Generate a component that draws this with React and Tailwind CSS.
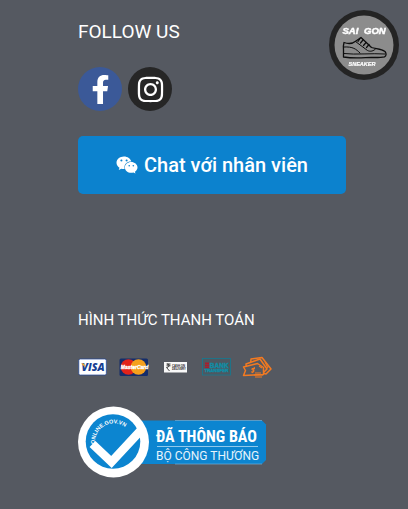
import { FaFacebookF, FaInstagram, FaWeixin } from "react-icons/fa";

function BrandBadge() {
  return (
    <svg viewBox="0 0 70 70" className="size-[70px]" aria-hidden="true">
      <circle cx="35" cy="35" r="35" fill="#242424" />
      <circle cx="35" cy="35" r="29.5" fill="#8c8c8c" />
      <g fill="#fff" stroke="#fff" fontFamily="'Liberation Sans', Arial, sans-serif" fontWeight="700" fontStyle="italic">
        <text x="13.5" y="24" fontSize="9.5" strokeWidth=".5">SAI</text>
        <text x="35" y="24" fontSize="9.5" strokeWidth=".5">GON</text>
        <text x="19.5" y="56" fontSize="5.5" strokeWidth=".2">SNEAKER</text>
      </g>
      <g fill="none" stroke="#0d0d0d" strokeLinejoin="round" strokeLinecap="round">
        <path strokeWidth="1.3" d="M15 32.500q-1 3.500-.5 7.500v7q10 1.500 22 .6c7-.4 14 .4 19-.8 2-1 2-3.500 .5-5.300-4-2.800-9-2.500-13.500-4L32 27.500l-5 3.500c-3 2.500-8 3-12 1.500z" />
        <path strokeWidth="1" d="M14.500 43.500c13 1.500 28-.5 41.500 .5M26.500 31.500l12 9c3 1.500 6 .5 8-1.500M15 37c9-.5 12 2 16 6" />
        <path strokeWidth="1.200" d="M31 28.500l-2 3M34 30l-2.500 3M37 32.500l-2.500 3M40 34.500l-2.500 3" />
      </g>
    </svg>
  );
}

function SocialLink({ label, color, children }) {
  return (
    <a
      href="#"
      aria-label={label}
      className={`flex size-11 items-center justify-center rounded-full text-[29px] text-white ${color}`}
    >
      {children}
    </a>
  );
}

function PaymentIcon({ label, children }) {
  return (
    <li className="flex">
      <svg viewBox="0 0 30 22" role="img" aria-label={label} className="h-[22px] w-[30px]">
        {children}
      </svg>
    </li>
  );
}

function PaymentMethods() {
  return (
    <ul className="mt-[26px] flex gap-[11px]">
      <PaymentIcon label="Visa">
        <rect x=".8" y="3" width="27.500" height="16" rx="1.500" fill="#fff" stroke="#1c449b" strokeWidth=".7" />
        <text x="3.500" y="15" fontFamily="'Open Sans', sans-serif" fontWeight="800" fontStyle="italic" fontSize="10.500" fill="#173f93">VISA</text>
        <path d="M3 7.500h3l1.500 4z" fill="#efa72a" />
      </PaymentIcon>
      <PaymentIcon label="MasterCard">
        <rect x=".5" y="2.500" width="28.500" height="17.500" rx="1.500" fill="#142d6b" />
        <circle cx="9.500" cy="11" r="7.800" fill="#e2231a" />
        <circle cx="19.500" cy="11" r="7.800" fill="#f5a01d" />
        <text x="1.800" y="13" fontFamily="'Liberation Sans', sans-serif" fontWeight="700" fontStyle="italic" fontSize="5" fill="#fff" stroke="#fff" strokeWidth=".3">MasterCard</text>
      </PaymentIcon>
      <PaymentIcon label="Cash on delivery">
        <rect x="4" y="6" width="23" height="10.500" fill="#f8f8f8" />
        <path d="M6.500 8h4M6.500 9.800h4M7 8q3 0 2 2-.5 1.500-2.500 1.500L9.500 15" fill="none" stroke="#333" strokeWidth=".9" />
        <g fontFamily="'Liberation Sans', sans-serif" fontWeight="700" fontSize="2.800" fill="#222">
          <text x="12" y="10.500">CASH ON</text>
          <text x="12" y="14.200">DELIVERY</text>
        </g>
      </PaymentIcon>
      <PaymentIcon label="Bank transfer">
        <rect x="1.500" y="2.500" width="28" height="16.500" fill="#4d5861" stroke="#147b92" strokeWidth=".8" />
        <path d="M4 7.200h4M4 9.200h4M4 11.200h4" stroke="#a91d2c" strokeWidth="1.500" />
        <g fontFamily="'Liberation Sans', sans-serif" fontWeight="700" fill="#118ca4" stroke="#118ca4" strokeWidth=".4">
          <text x="8.800" y="11.500" fontSize="6.500">BANK</text>
          <text x="3.500" y="15.800" fontSize="4.400">TRANSFER</text>
        </g>
      </PaymentIcon>
      <PaymentIcon label="Cash">
        <g fill="#555961" stroke="#f37a21" strokeWidth="1.500" strokeLinejoin="round">
          <path d="M9 3l11-1.500 9 11.500-5 5-16-4z" />
          <path d="M4 8l14-5 7 10-5 5H5z" />
          <path d="M1.500 11l14-3.500 6 4v7l-20 1 2-5z" />
          <path d="M13 12.500h-2.500q-1.500 1 .5 1.500t0 2H9M12.500 11l-2 6M17 10l3 2M23 6l3 6" strokeWidth="1.100" fill="none" />
          <path d="M13 17h6M12 19h9M13 21h7" strokeWidth="1.200" fill="none" />
        </g>
      </PaymentIcon>
    </ul>
  );
}

function CertificationSeal() {
  return (
    <svg viewBox="0 0 190 74" className="h-[74px] w-[190px]" aria-hidden="true">
      <defs>
        <path id="sealArc" d="M17 38A19 19 0 0 1 53 28" />
      </defs>
      <path d="M36 14.500H184l4 4V54l-4 4H36z" fill="#0c85d0" />
      <path d="M97 14.500H184M97 58H184" stroke="#70afd8" strokeWidth=".7" />
      <circle cx="35.500" cy="36" r="35.500" fill="#fff" />
      <circle cx="35" cy="35.500" r="27.300" fill="#0c85d0" />
      <path d="M14.500 38L33.500 56 65 22" fill="none" stroke="#fff" strokeWidth="8.500" />
      <text fontFamily="'Liberation Sans', sans-serif" fontWeight="700" fontSize="5.500" fill="#fff">
        <textPath href="#sealArc">ONLINE.GOV.VN</textPath>
      </text>
      <text x="78" y="36" fontFamily="'Roboto Condensed', Roboto, sans-serif" fontWeight="700" fontSize="16" fill="#fff">ĐÃ THÔNG BÁO</text>
      <path d="M79 40.500h101" stroke="#9fd0ef" strokeWidth=".9" />
      <text x="78" y="53.500" fontFamily="Roboto, sans-serif" fontSize="12" fill="#e6f4fc">BỘ CÔNG THƯƠNG</text>
    </svg>
  );
}

export default function App() {
  return (
    <div className="min-h-screen bg-[#555961] font-['Roboto',sans-serif] text-white">
      <a href="#" aria-label="Sai Gon Sneaker" className="fixed top-[10px] right-[9px]">
        <BrandBadge />
      </a>
      <footer className="pt-5 pr-[62px] pb-[29px] pl-[78px]">
        <section>
          <h2 className="text-[19px] leading-6">FOLLOW US</h2>
          <div className="mt-[23px] flex gap-[6px]">
            <SocialLink label="Facebook" color="bg-[#3b5998]">
              <FaFacebookF />
            </SocialLink>
            <SocialLink label="Instagram" color="bg-[#262626]">
              <FaInstagram />
            </SocialLink>
          </div>
          <button
            type="button"
            className="mt-[25px] flex h-[58px] w-full max-w-[268px] items-center justify-center gap-[6px] rounded-[5px] bg-[#0c82ce] text-xl font-medium"
          >
            <FaWeixin className="text-[22px]" />
            <span>Chat với nhân viên</span>
          </button>
        </section>
        <section className="mt-[116px]">
          <h2 className="text-[15px] leading-5">HÌNH THỨC THANH TOÁN</h2>
          <PaymentMethods />
          <a href="#" aria-label="Đã thông báo Bộ Công Thương" className="mt-[28px] inline-flex align-top">
            <CertificationSeal />
          </a>
        </section>
      </footer>
    </div>
  );
}
